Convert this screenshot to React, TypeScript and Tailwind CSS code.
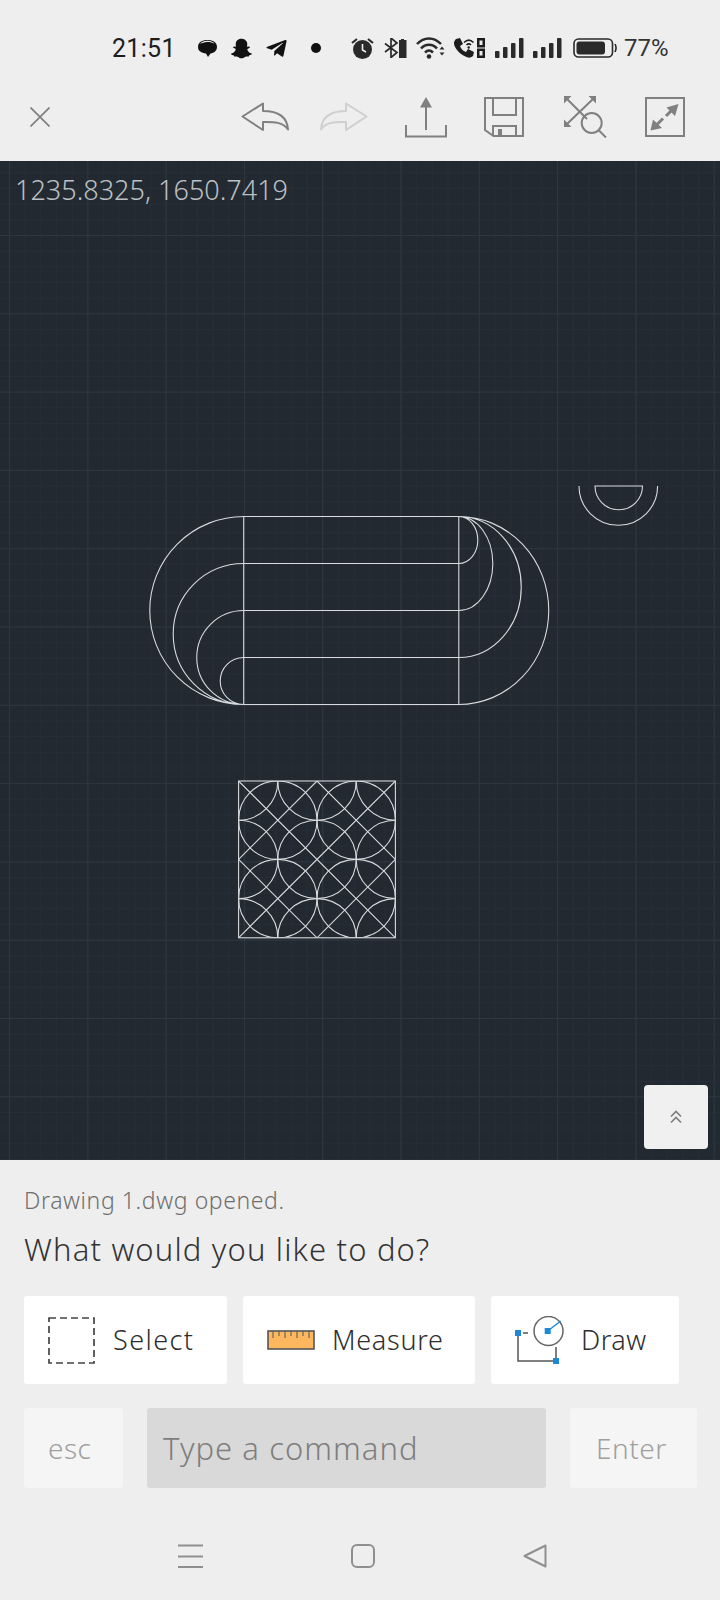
import React from "react";
import { FaSnapchatGhost, FaTelegramPlane } from "react-icons/fa";

const G = "#808080";

function Signal({ className }: { className?: string }) {
  return (
    <svg width="29" height="20" viewBox="0 0 29 20" className={className}>
      <rect x="0" y="13" width="4.5" height="7" rx="1" fill="#2a2a2a" />
      <rect x="8" y="9" width="4.5" height="11" rx="1" fill="#2a2a2a" />
      <rect x="16" y="5" width="4.5" height="15" rx="1" fill="#2a2a2a" />
      <rect x="24" y="0" width="4.5" height="20" rx="1" fill="#2a2a2a" />
    </svg>
  );
}

function StatusBar() {
  return (
    <div className="h-[96px] flex items-center pl-[112px] text-[#1d1d1d] font-['Roboto',sans-serif]">
      <span className="text-[25px] leading-none w-[61px] tracking-[0.3px]">21:51</span>
      <svg width="21" height="20" viewBox="0 0 21 20" className="ml-[24px]">
        <path d="M1 9C1 4.5 5 2 10.500 2S20 4.500 20 9c0 3.800-3 6-6.500 6.500L11 19l-2-3.500C4.500 15 1 13 1 9Z" fill="#111" />
        <path d="M3 6C5 3.200 8 2.600 11 2.800c3 .2 5.300 1.200 6.500 3C15 4.200 12.500 3.800 10 4 7.500 4.200 5 5 3 6Z" fill="#eee" />
      </svg>
      <FaSnapchatGhost className="ml-[12px] w-[23px] h-[21px] text-[#111]" />
      <FaTelegramPlane className="ml-[12px] w-[23px] h-[23px] text-[#111]" />
      <span className="ml-[23px] w-[10px] h-[10px] rounded-full bg-[#111]" />
      <svg width="23" height="23" viewBox="0 0 23 23" className="ml-[30px]">
        <circle cx="11.500" cy="12.500" r="9.500" fill="#2a2a2a" />
        <path d="M11.500 7v6l3.500 2" stroke="#eee" strokeWidth="1.600" fill="none" />
        <path d="M1 6l5-4M22 6l-5-4" stroke="#2a2a2a" strokeWidth="2.200" />
      </svg>
      <svg width="23" height="20" viewBox="0 0 23 20" className="ml-[10px]">
        <path d="M1 5.500l12 9-6 5V0l6 5-12 9" stroke="#2a2a2a" strokeWidth="1.700" fill="none" />
        <path d="M15 2h2V1h3v1h2.500v18H15Z" fill="#2a2a2a" />
      </svg>
      <svg width="29" height="22" viewBox="0 0 29 22" className="ml-[9px]">
        <path d="M1 7c7-7.500 17-7.500 24 0M5 11.500c4.500-5 11.500-5 16 0M9 15.500c2.500-2.500 5.500-2.500 8 0" stroke="#2a2a2a" strokeWidth="2.500" fill="none" />
        <circle cx="13" cy="19.500" r="2.300" fill="#2a2a2a" />
        <path d="M23.500 12.500l2.500-3 2.500 3ZM23.500 15.500l2.500 3 2.500-3Z" fill="#2a2a2a" />
      </svg>
      <svg width="32" height="20" viewBox="0 0 32 20" className="ml-[8px]">
        <path d="M3 1l4-1 3 6-3 2c1 3 3 5 6 6l2-3 6 3-1 4c-1 1-3 2-5 1.500C8 17.500 2 11 1 6c-.3-2 .8-4 2-5Z" fill="#1d1d1d" />
        <path d="M11 4.500c3-3 6.500-3 9.500 0M13.500 7c1.500-1.500 3-1.500 4.500 0" stroke="#1d1d1d" strokeWidth="1.500" fill="none" />
        <circle cx="15.700" cy="9.500" r="1.200" fill="#1d1d1d" />
        <rect x="24" y="0" width="8" height="9.500" fill="#1d1d1d" />
        <rect x="24" y="10.500" width="8" height="9.500" fill="#1d1d1d" />
        <rect x="26.500" y="2.500" width="3" height="4.500" fill="#eee" />
        <rect x="26.500" y="13" width="3" height="4.500" fill="#eee" />
      </svg>
      <Signal className="ml-[10px]" />
      <Signal className="ml-[9px]" />
      <svg width="44" height="20" viewBox="0 0 44 20" className="ml-[11px]">
        <rect x="1" y="1" width="38.500" height="18" rx="4.500" fill="none" stroke="#2a2a2a" strokeWidth="1.600" />
        <rect x="3.500" y="3.500" width="28.500" height="13" rx="3" fill="#2a2a2a" />
        <path d="M42 6c1.300 2.500 1.300 5.500 0 8" stroke="#2a2a2a" strokeWidth="1.600" fill="none" />
      </svg>
      <span className="ml-[7px] text-[24px] leading-none text-[#333]">77%</span>
    </div>
  );
}

function Toolbar() {
  return (
    <div className="h-[65px] flex items-start pl-[30px]">
      <div className="flex h-[42px] items-center">
        <svg width="20" height="20" viewBox="0 0 20 20">
          <path d="M0.500 0.500l19 19M19.500 0.500l-19 19" stroke={G} strokeWidth="1.700" />
        </svg>
        <svg width="48" height="30" viewBox="0 0 48 30" className="ml-[191px]">
          <path d="M1.500 14.500L22 1.500v7.500C35 9 46 13 47 27.500 42 20 33 19.800 22 20v8Z" fill="none" stroke={G} strokeWidth="2" strokeLinejoin="round" />
        </svg>
        <svg width="48" height="30" viewBox="0 0 48 30" className="ml-[31px] -scale-x-100">
          <path d="M1.500 14.500L22 1.500v7.500C35 9 46 13 47 27.500 42 20 33 19.800 22 20v8Z" fill="none" stroke="#cfcfcf" strokeWidth="2" strokeLinejoin="round" />
        </svg>
        <svg width="42" height="41" viewBox="0 0 42 41" className="ml-[37px]">
          <path d="M1 28v11.500h40V28" fill="none" stroke={G} strokeWidth="2" />
          <path d="M21 8v25" stroke={G} strokeWidth="2" />
          <path d="M15 10.500L21 0l6 10.500Z" fill={G} />
        </svg>
        <svg width="40" height="40" viewBox="0 0 40 40" className="ml-[37px]">
          <path d="M1 1h38v38H9.500L1 33Z" fill="none" stroke={G} strokeWidth="2" />
          <path d="M9 1v17h23V1M9 39V29h23v10" fill="none" stroke={G} strokeWidth="2" />
          <rect x="14" y="32" width="4" height="7" fill={G} />
        </svg>
        <svg width="43" height="42" viewBox="0 0 43 42" className="ml-[40px]">
          <g stroke={G} strokeWidth="2" fill="none">
            <path d="M3 3l20 20M29 3L3 28" />
            <circle cx="27.700" cy="27" r="10" />
            <path d="M35 34.500l7 7" />
          </g>
          <path d="M0 0h7.500L0 7.500ZM32 0v7.500L24.500 0ZM0 31v-7.500L7.500 31Z" fill={G} />
        </svg>
        <svg width="40" height="40" viewBox="0 0 40 40" className="ml-[38px]">
          <rect x="1" y="1" width="38" height="38" fill="none" stroke={G} strokeWidth="2" />
          <path d="M33.500 7l-12 3.500 8.500 8.500ZM5.500 33.500l2.500-11 9 8.500Z" fill={G} />
          <path d="M21 19l6-6M18 21.500l-6 6" stroke={G} strokeWidth="3" />
        </svg>
      </div>
    </div>
  );
}

function Canvas() {
  const u = 39.2;
  const x0 = 238.6;
  const y0 = 781;
  const even = [0, 2, 4].flatMap((i) => [0, 2, 4].map((j) => [x0 + i * u, y0 + j * u]));
  const odd = [1, 3].flatMap((i) => [1, 3].map((j) => [x0 + i * u, y0 + j * u]));
  const circles = [...even, ...odd];
  const line = "#d8dadd";
  return (
    <div className="relative h-[999px] bg-[#222931] overflow-hidden">
      <svg width="720" height="999" viewBox="0 161 720 999" className="absolute inset-0">
        <defs>
          <pattern id="minor" patternUnits="userSpaceOnUse" x="9" y="235" width="15.66" height="15.66">
            <path d="M0.500 0V15.660M0 0.500H15.660" stroke="#262d36" strokeWidth="1" fill="none" />
          </pattern>
          <pattern id="major" patternUnits="userSpaceOnUse" x="9" y="235" width="78.300" height="78.300">
            <path d="M0.500 0V78.300M0 0.500H78.300" stroke="#2e3640" strokeWidth="1" fill="none" />
          </pattern>
          <clipPath id="sq">
            <rect x={x0} y={y0} width={u * 4} height={u * 4} />
          </clipPath>
        </defs>
        <rect x="0" y="161" width="720" height="999" fill="url(#minor)" />
        <rect x="0" y="161" width="720" height="999" fill="url(#major)" />
        <g fill="none" stroke={line} strokeWidth="1.100">
          <path d="M243.700 516.500H458.800V704.500H243.700ZM243.700 563.500H458.800M243.700 610.500H458.800M243.700 657.500H458.800" />
          <path d="M243.700 516.500A94 94 0 0 0 243.700 704.500M243.700 563.500A70.500 70.500 0 0 0 243.700 704.500M243.700 610.500A47 47 0 0 0 243.700 704.500M243.700 657.500A23.500 23.500 0 0 0 243.700 704.500" />
          <path d="M458.800 516.500A90 94 0 0 1 458.800 704.500M458.800 516.500A62.500 70.500 0 0 1 458.800 657.500M458.800 516.500A34 47 0 0 1 458.800 610.500M458.800 516.500A19 23.500 0 0 1 458.800 563.500" />
          <path d="M595 486H642.500A23.750 23.750 0 0 1 595 486ZM579 486A39.300 39.300 0 0 0 657.600 486" />
          <rect x={x0} y={y0} width={u * 4} height={u * 4} />
          <g clipPath="url(#sq)">
            {circles.map(([cx, cy]) => (
              <circle key={`${cx}-${cy}`} cx={cx} cy={cy} r={u} />
            ))}
            <path d={`M${x0} ${y0}L${x0 + 4 * u} ${y0 + 4 * u}M${x0 + 4 * u} ${y0}L${x0} ${y0 + 4 * u}`} />
            <path d={`M${x0 + 2 * u} ${y0}L${x0 + 4 * u} ${y0 + 2 * u}L${x0 + 2 * u} ${y0 + 4 * u}L${x0} ${y0 + 2 * u}Z`} />
          </g>
        </g>
      </svg>
      <div className="absolute left-[15px] top-[11px] text-[27px] leading-[36px] text-[#bcc0c4] font-light font-['Noto_Sans',sans-serif]">
        1235.8325, 1650.7419
      </div>
      <div className="absolute left-[644px] top-[924px] w-[64px] h-[64px] rounded-[4px] bg-[#f0f0f0] flex items-center justify-center">
        <svg width="12" height="14" viewBox="0 0 12 14">
          <path d="M1 6.500L6 1.500l5 5M1 12.500l5-5 5 5" fill="none" stroke="#7d7d7d" strokeWidth="1.600" />
        </svg>
      </div>
    </div>
  );
}

function Panel() {
  return (
    <div className="flex-1 pl-[24px] pt-[26px] font-['Noto_Sans',sans-serif] font-light">
      <div className="h-[28px] leading-[28px] text-[23px] text-[#6e6e6e] tracking-[0.6px]">Drawing 1.dwg opened.</div>
      <div className="mt-[15px] h-[40px] leading-[40px] text-[31px] text-[#333333] tracking-[1.16px]">What would you like to do?</div>
      <div className="mt-[27px] flex gap-[16px] h-[88px] text-[#2e2e2e] text-[27px]">
        <div className="w-[203px] bg-white rounded-[3px] flex items-center pl-[24px]">
          <svg width="47" height="47" viewBox="0 0 47 47">
            <rect x="1" y="1" width="45" height="45" fill="none" stroke="#444" strokeWidth="1.700" strokeDasharray="7 4" />
          </svg>
          <span className="ml-[18px] tracking-[1.4px]">Select</span>
        </div>
        <div className="w-[232px] bg-white rounded-[3px] flex items-center pl-[24px]">
          <svg width="48" height="20" viewBox="0 0 48 20">
            <rect x="1" y="1" width="46" height="18" fill="#fdb85f" stroke="#555" strokeWidth="1.600" />
            <path d="M6 1v7M12 1v5M18 1v7M24 1v5M30 1v7M36 1v5M42 1v7" stroke="#555" strokeWidth="1" />
          </svg>
          <span className="ml-[17px] tracking-[0.7px]">Measure</span>
        </div>
        <div className="w-[188px] bg-white rounded-[3px] flex items-center pl-[24px]">
          <svg width="49" height="48" viewBox="0 0 49 48">
            <circle cx="33.500" cy="15" r="14.500" fill="none" stroke="#666" strokeWidth="1.500" />
            <path d="M32.700 15l13-10" stroke="#1e88d8" strokeWidth="1.500" />
            <rect x="29.700" y="12" width="6" height="6" fill="#1e88d8" />
            <path d="M3 17v28h38M41 31v14M8 17h5" fill="none" stroke="#555" strokeWidth="1.500" />
            <rect x="0" y="14" width="6" height="6" fill="#1e88d8" />
            <rect x="38" y="42" width="6" height="6" fill="#1e88d8" />
          </svg>
          <span className="ml-[17px] tracking-[0.5px]">Draw</span>
        </div>
      </div>
      <div className="mt-[24px] flex gap-[24px] h-[80px] text-[28px]">
        <div className="w-[99px] bg-[#f5f5f5] rounded-[3px] flex items-center pl-[24px] text-[#a0a0a0] tracking-[0.5px]">esc</div>
        <div className="w-[399px] bg-[#d9d9d9] rounded-[3px] flex items-center pl-[16px] text-[31px] text-[#7e7e7e] tracking-[1.05px]">Type a command</div>
        <div className="w-[127px] bg-[#f5f5f5] rounded-[3px] flex items-center pl-[26px] text-[#a0a0a0] tracking-[0.5px]">Enter</div>
      </div>
      <div className="mt-[56px] h-[24px] flex items-center pl-[154px]">
        <svg width="25" height="24" viewBox="0 0 25 24">
          <path d="M0 1.500H25M0 12.500H25M0 23H25" stroke="#8f8f8f" strokeWidth="2" />
        </svg>
        <span className="ml-[148px] w-[24px] h-[24px] rounded-[6px] border-2 border-[#8f8f8f]" />
        <svg width="24" height="24" viewBox="0 0 24 24" className="ml-[148px]">
          <path d="M22.500 1.500L1.500 12l21 10.500Z" fill="none" stroke="#8f8f8f" strokeWidth="2" strokeLinejoin="round" />
        </svg>
      </div>
    </div>
  );
}

export default function App() {
  return (
    <div className="w-[720px] h-[1600px] bg-[#eeeeee] flex flex-col overflow-hidden">
      <StatusBar />
      <Toolbar />
      <Canvas />
      <Panel />
    </div>
  );
}
